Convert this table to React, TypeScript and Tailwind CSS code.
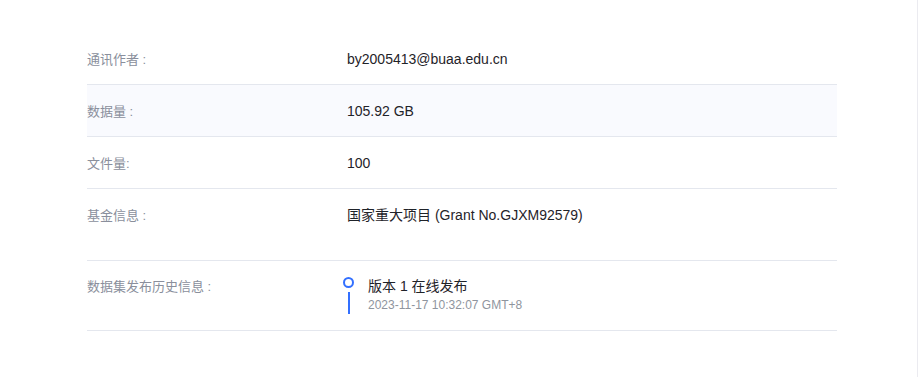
const rows = [
  { label: '通讯作者 :', value: 'by2005413@buaa.edu.cn' },
  { label: '数据量 :', value: '105.92 GB', shaded: true },
  { label: '文件量:', value: '100' },
];

export default function App() {
  return (
    <div
      className="relative w-[922px] h-[377px] bg-white overflow-hidden"
      style={{ fontFamily: '"Liberation Sans", Arial, "Noto Sans CJK SC", sans-serif' }}
    >
      {/* right panel edge */}
      <div className="absolute top-0 right-[4px] w-px h-[377px] bg-[#ebebf0]" />

      <div className="ml-[87px] mt-[33px] w-[750px]">
        {rows.map((r, i) => (
          <div
            key={i}
            className={`flex border-b border-[#e4e7ee] pt-[16px] pb-[14px] leading-[21px] ${r.shaded ? 'bg-[#f9fafe]' : ''}`}
          >
            <div className="w-[260px] text-[13px] text-[#8a8f9c]">{r.label}</div>
            <div className="text-[14px] text-[#1f2329]">{r.value}</div>
          </div>
        ))}

        <div className="flex border-b border-[#e4e7ee] pt-[16px] pb-[34px] leading-[21px]">
          <div className="w-[260px] text-[13px] text-[#8a8f9c]">基金信息 :</div>
          <div className="text-[14px] text-[#1f2329]">国家重大项目 (Grant No.GJXM92579)</div>
        </div>

        <div className="flex border-b border-[#e4e7ee] pt-[15px] pb-[16px]">
          <div className="w-[256px] text-[13px] leading-[21px] text-[#8a8f9c]">数据集发布历史信息 :</div>
          <div className="flex gap-[14px]">
            <div className="flex flex-col items-center pt-[1px] w-[11px]">
              <div className="w-[11px] h-[11px] rounded-full border-2 border-[#3370ff]" />
              <div className="w-[2px] h-[22px] mt-[4px] bg-[#3370ff]" />
            </div>
            <div>
              <div className="text-[14px] leading-[21px] text-[#1f2329]">版本 1 在线发布</div>
              <div className="text-[12px] leading-[16px] text-[#8f959e]">2023-11-17 10:32:07 GMT+8</div>
            </div>
          </div>
        </div>
      </div>
    </div>
  );
}
